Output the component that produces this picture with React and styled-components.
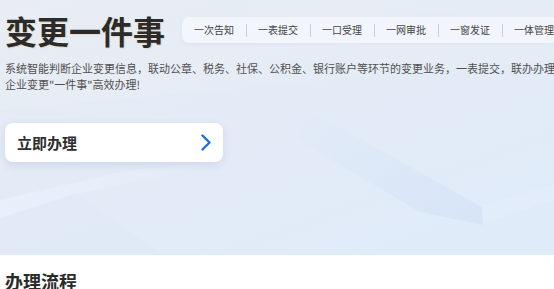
import React from "react";
import styled, { createGlobalStyle } from "styled-components";

const GlobalStyle = createGlobalStyle`
  html, body { margin: 0; padding: 0; background: #fff; overflow: hidden; }
  body { font-family: "Noto Sans CJK SC", "Noto Sans", sans-serif; color: #333; }
`;

const Page = styled.div`
  width: 554px;
  height: 289px;
  overflow: hidden;
`;

const Hero = styled.section`
  position: relative;
  height: 255px;
  box-sizing: border-box;
  padding: 14px 0 0 5px;
  overflow: hidden;
  background: linear-gradient(160deg, #e8ecf3 0%, #e4ebf6 40%, #dfebfa 100%);
`;

const Deco = styled.svg`
  position: absolute;
  inset: 0;
  width: 100%;
  height: 100%;
  pointer-events: none;
`;

const Content = styled.div`
  position: relative;
`;

const TopRow = styled.div`
  display: flex;
  align-items: center;
  gap: 17px;
`;

const Title = styled.h1`
  margin: 0;
  font-size: 32px;
  line-height: 32px;
  font-weight: 700;
  color: #2b2b2b;
  white-space: nowrap;
  text-shadow: 1px 1px 1px rgba(214, 170, 90, 0.3);
`;

const TagBar = styled.ul`
  display: flex;
  align-items: center;
  list-style: none;
  margin: 0;
  height: 26px;
  padding: 0 0 0 12px;
  border-radius: 7px 0 0 7px;
  background: rgba(246, 249, 253, 0.75);
  box-shadow: 0 1px 4px rgba(40, 70, 130, 0.05);
  white-space: nowrap;
  flex: 1;
`;

const Tag = styled.li`
  display: flex;
  align-items: center;
  font-size: 10px;
  line-height: 12px;
  color: #444;
  &:not(:last-child)::after {
    content: "";
    display: block;
    width: 1px;
    height: 13px;
    margin: 0 11px 0 12px;
    background: #c9ced6;
  }
`;

const Desc = styled.p`
  margin: 14px 0 0;
  width: 552px;
  font-size: 11px;
  line-height: 16px;
  color: #505050;
`;

const ActionButton = styled.button`
  margin-top: 31px;
  display: flex;
  align-items: center;
  justify-content: space-between;
  width: 218px;
  height: 39px;
  box-sizing: border-box;
  padding: 0 11px 0 12px;
  border: none;
  border-radius: 8px;
  background: #fff;
  box-shadow: 0 3px 10px rgba(40, 70, 130, 0.12);
  font-family: inherit;
  font-size: 15px;
  font-weight: 700;
  color: #2e2e2e;
  cursor: pointer;
`;

const SectionTitle = styled.h2`
  margin: 15px 0 0 5px;
  font-size: 18px;
  line-height: 22px;
  font-weight: 700;
  color: #2b2b2b;
`;

const tags = ["一次告知", "一表提交", "一口受理", "一网审批", "一窗发证", "一体管理"];

export default function App() {
  return (
    <Page>
      <GlobalStyle />
      <Hero>
        <Deco viewBox="0 0 554 255" preserveAspectRatio="none">
          <defs>
            <linearGradient id="slab" x1="0" y1="0" x2="1" y2="1">
              <stop offset="0" stopColor="#d6e4f7" stopOpacity="0" />
              <stop offset="0.6" stopColor="#d6e4f7" stopOpacity="0.55" />
              <stop offset="1" stopColor="#d3e2f6" stopOpacity="0.75" />
            </linearGradient>
            <linearGradient id="hl" x1="0" y1="0" x2="1" y2="0">
              <stop offset="0" stopColor="#ebf1fc" stopOpacity="0.8" />
              <stop offset="1" stopColor="#ebf1fc" stopOpacity="0" />
            </linearGradient>
          </defs>
          <polygon points="298,104 482,207 483,225 420,212 298,140" fill="url(#slab)" />
          <polygon points="482,205 554,184 554,200 483,224" fill="#e3edfb" opacity="0.5" />
          <polygon points="0,200 130,170 240,160 75,194 0,218" fill="url(#hl)" />
          <polygon points="75,194 165,255 0,255 0,218" fill="#dfe8f6" opacity="0.4" />
          <polygon points="0,0 554,0 554,60 0,110" fill="#eaeef5" opacity="0.3" />
        </Deco>
        <Content>
          <TopRow>
            <Title>变更一件事</Title>
            <TagBar>
              {tags.map((t) => (
                <Tag key={t}>{t}</Tag>
              ))}
            </TagBar>
          </TopRow>
          <Desc>
            系统智能判断企业变更信息，联动公章、税务、社保、公积金、银行账户等环节的变更业务，一表提交，联办办理企业变更"一件事"高效办理!
          </Desc>
          <ActionButton>
            <span>立即办理</span>
            <svg width="12" height="17" viewBox="0 0 12 17" fill="none">
              <path d="M2.5 1.5 L9.5 8.5 L2.5 15.5" stroke="#1d6fd6" strokeWidth="2.4" strokeLinecap="round" strokeLinejoin="round" />
            </svg>
          </ActionButton>
        </Content>
      </Hero>
      <SectionTitle>办理流程</SectionTitle>
    </Page>
  );
}
